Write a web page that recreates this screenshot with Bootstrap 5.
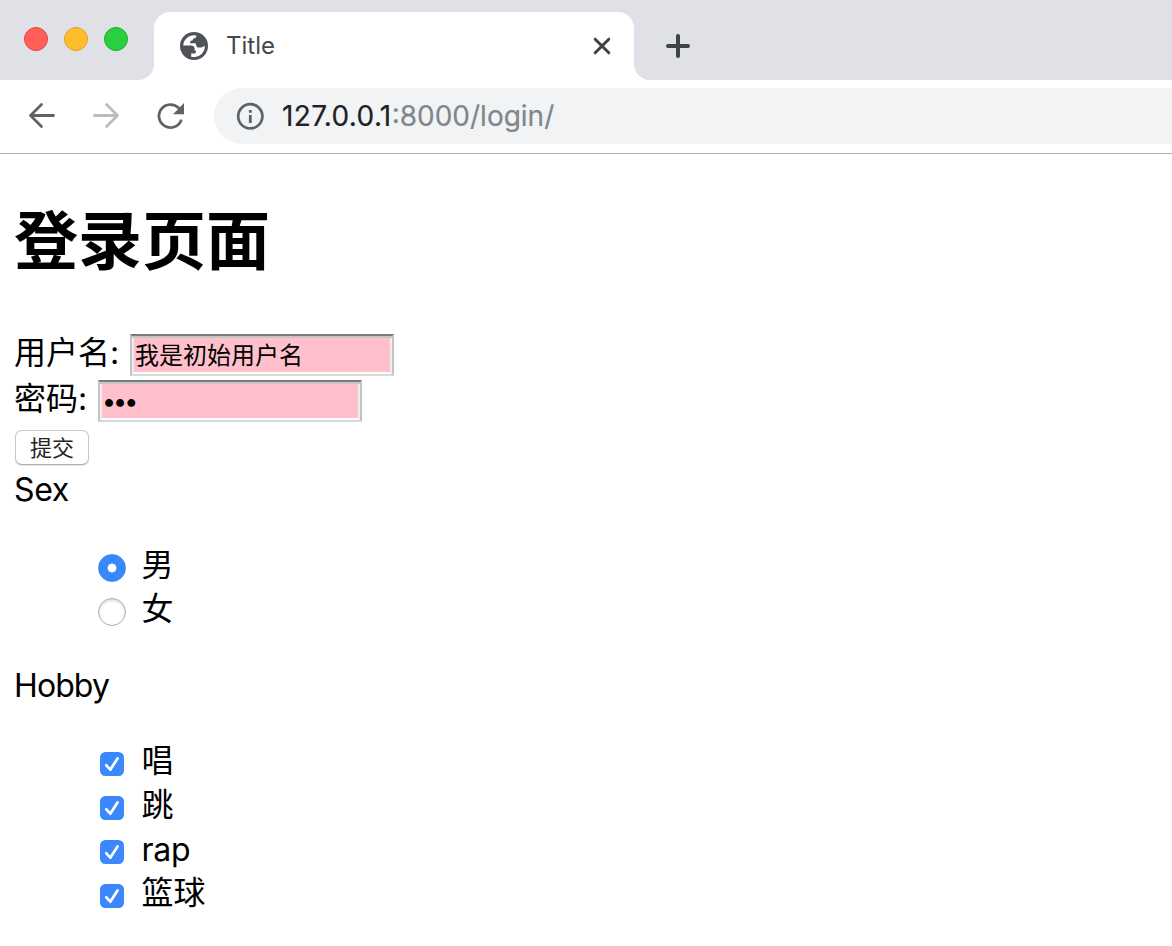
<!DOCTYPE html>
<html lang="zh-CN">
<head>
<meta charset="utf-8">
<meta name="viewport" content="width=device-width, initial-scale=1">
<title>Title</title>
<link href="https://cdn.jsdelivr.net/npm/bootstrap@5.3.0/dist/css/bootstrap.min.css" rel="stylesheet">
<style>
body{font-family:Inter,"Noto Sans CJK SC",sans-serif;color:#000;background:#fff;height:946px;overflow:hidden}
svg{display:block;flex:none}
.strip{height:80px}
.strip-start{width:154px;background:#dfe1e6;border-bottom-right-radius:16px;gap:16px;padding:27px 0 0 24px}
.strip-end{background:#dfe1e6;border-bottom-left-radius:16px;padding:32px 0 0 30px}
.light{width:24px;height:24px;border-radius:50%;border:1px solid}
.light-close{background:#ff5f57;border-color:#e2463f}
.light-min{background:#ffbd2e;border-color:#dfa023}
.light-max{background:#28cf41;border-color:#1dad2b}
.tab-wrap{width:480px;background:linear-gradient(#dfe1e6 40px,#fff 40px)}
.browser-tab{height:68px;background:#fff;border-radius:16px 16px 0 0;padding:0 22px 0 26px}
.tab-title{font-size:24px;margin-left:18px;color:#45484c;line-height:30px}
.toolbar{height:74px;border-bottom:1px solid #b0b0b2;padding:8px 0 9px 26px}
.address{height:56px;background:#f1f3f4;border-radius:28px 0 0 28px;padding-left:22px;margin-left:24px}
.url{font-size:28px;line-height:36px;margin-left:18px;color:#202124;letter-spacing:.35px;-webkit-text-stroke:.2px}
.url .rest{color:#80868b;letter-spacing:0}
.page{padding:0 15px;font-size:32px;line-height:44px}
.page h1{font-size:64px;line-height:90px;font-weight:700;margin:42px 0 0 -1px}
.line{height:46px}
.line label{text-indent:-1px;margin-top:-1px}
.latin{margin-left:-1px}
.inset{width:264px;height:42px;border:2px solid;border-color:#7c7b7c #c3c3c3 #d9d9d9 #c3c3c3;background:pink;box-shadow:inset 0 2px #c9c3c4,inset 2px 0 #eee,inset -2px 0 #eee,inset 0 -2px #fff;padding:0 3px 4px;font-size:24px;line-height:34px;color:#000;outline:0;border-radius:0}
.inset[type=password]{font-size:25px;letter-spacing:-3px;padding:2px 2px 2px}
.submit{width:74px;height:35px;border:1px solid #c7c7c7;border-bottom-color:#b0b0b0;border-radius:7px;background:#fff;box-shadow:0 1px 1px #0002;font-size:22px;line-height:30px;padding:0;color:#222}
.choices{padding-left:83px}
.choice{height:44px}
.page .form-check-input{margin:0;float:none;flex:none;box-shadow:none}
.page .form-check-input[type=radio]{width:28px;height:28px;border:1px solid #aaa;box-shadow:inset 0 2px 3px #0002}
.page .form-check-input[type=radio]:checked{border-color:#3b88fd;background:radial-gradient(circle,#fff 4px,#3b88fd 4.8px);box-shadow:none}
.page .form-check-input[type=checkbox]{width:24px;height:24px;margin-left:2px;margin-right:2px;border:0;border-radius:5.5px;background:#3b88fd url("data:image/svg+xml,%3Csvg xmlns='http://www.w3.org/2000/svg' viewBox='0 0 24 24'%3E%3Cpath d='M6.3 13.3l4 4.4 7.2-11.2' fill='none' stroke='white' stroke-width='2.7' stroke-linecap='round' stroke-linejoin='round'/%3E%3C/svg%3E") center/24px no-repeat}
.choice label{margin:0 0 6px 15.5px}
</style>
</head>
<body>
<header>
  <div class="strip d-flex">
    <div class="strip-start d-flex flex-shrink-0">
      <span class="light light-close"></span><span class="light light-min"></span><span class="light light-max"></span>
    </div>
    <div class="tab-wrap d-flex flex-column justify-content-end flex-shrink-0">
      <div class="browser-tab d-flex align-items-center">
        <svg width="28" height="28" viewBox="0 0 28 28"><circle cx="14" cy="14" r="14" fill="#505259"/><path d="M3.2 13.6A10.8 10.8 0 0 1 16.4 3.4C16.4 5.4 15.3 6.2 13.4 6.4C12.9 8.2 12 8.8 10.2 9V11.3H15.2C16 11.5 16 12.4 16.2 13.4C16.6 14.8 17.5 15.4 19 15.4H21.5L24.8 13.8A10.8 10.8 0 0 1 11.2 24.7V21.6H14.2C15.6 21.4 16 20.4 16 18.4H14.6C15 15.4 13.8 13.6 11 13.6Z" fill="#fff"/></svg>
        <span class="tab-title">Title</span>
        <svg class="ms-auto" width="20" height="20" viewBox="0 0 20 20" fill="none" stroke="#3f4246" stroke-width="3" stroke-linecap="round"><path d="M3.2 3.2l13.6 13.6M16.8 3.2L3.2 16.8"/></svg>
      </div>
    </div>
    <div class="strip-end flex-grow-1"><svg width="28" height="28" viewBox="0 0 28 28" fill="none" stroke="#3f4246" stroke-width="4" stroke-linecap="round"><path d="M14 4v20M4 14h20"/></svg></div>
  </div>
  <nav class="toolbar d-flex align-items-center">
    <svg width="32" height="32" viewBox="0 0 32 32" fill="none" stroke="#5f6368" stroke-width="2.8" stroke-linecap="round" stroke-linejoin="round"><path d="M27.5 15.5H4.5M15.5 4.5l-11 11 11 11"/></svg>
    <svg class="ms-4 me-2" width="48" height="32" viewBox="-8 0 48 32" fill="none" stroke="#babcbe" stroke-width="2.8" stroke-linecap="round" stroke-linejoin="round"><path d="M4.5 15.5h23M16.5 4.5l11 11-11 11"/></svg>
    <svg class="ms-3" width="36" height="32" viewBox="0 0 36 32"><path d="M27 20.7A11.5 11.5 0 1 1 24.7 8" fill="none" stroke="#5f6368" stroke-width="2.8" stroke-linecap="round"/><path d="M30 3v11.2H19z" fill="#5f6368"/></svg>
    <div class="address d-flex align-items-center flex-grow-1">
      <svg width="28" height="28" viewBox="0 0 28 28"><circle cx="14.3" cy="14.3" r="12.1" fill="none" stroke="#5f6368" stroke-width="2.7"/><path d="M12.9 8h2.8v2.8h-2.8zM12.9 13h2.8v8h-2.8z" fill="#5f6368"/></svg>
      <span class="url">127.0.0.1<span class="rest">:8000/login/</span></span>
    </div>
  </nav>
</header>
<main class="page">
  <h1>登录页面</h1>
  <form style="padding-top:46px">
    <div class="line d-flex"><label for="user" style="width:115px">用户名:</label><input id="user" class="inset" style="margin-top:2px" value="我是初始用户名"></div>
    <div class="line d-flex"><label for="pwd" style="width:83px">密码:</label><input id="pwd" class="inset" style="margin-top:2px" type="password" value="123"></div>
    <div class="d-flex" style="padding-top:6px"><button type="button" class="submit">提交</button></div>
    <div class="latin" style="margin-top:3px;letter-spacing:-.3px">Sex</div>
    <div class="choices" style="padding-top:34px">
      <div class="choice d-flex align-items-center"><input id="m" class="form-check-input" type="radio" name="sex" checked><label for="m">男</label></div>
      <div class="choice d-flex align-items-center"><input id="f" class="form-check-input" type="radio" name="sex"><label for="f">女</label></div>
    </div>
    <div class="latin" style="margin-top:30px;letter-spacing:-.9px">Hobby</div>
    <div class="choices" style="padding-top:34px">
      <div class="choice d-flex align-items-center"><input id="h1" class="form-check-input" type="checkbox" checked><label for="h1">唱</label></div>
      <div class="choice d-flex align-items-center"><input id="h2" class="form-check-input" type="checkbox" checked><label for="h2">跳</label></div>
      <div class="choice d-flex align-items-center"><input id="h3" class="form-check-input" type="checkbox" checked><label for="h3" style="letter-spacing:-.3px;margin-bottom:4px">rap</label></div>
      <div class="choice d-flex align-items-center"><input id="h4" class="form-check-input" type="checkbox" checked><label for="h4">篮球</label></div>
    </div>
  </form>
</main>
<script src="https://cdn.jsdelivr.net/npm/bootstrap@5.3.0/dist/js/bootstrap.bundle.min.js"></script>
</body>
</html>
